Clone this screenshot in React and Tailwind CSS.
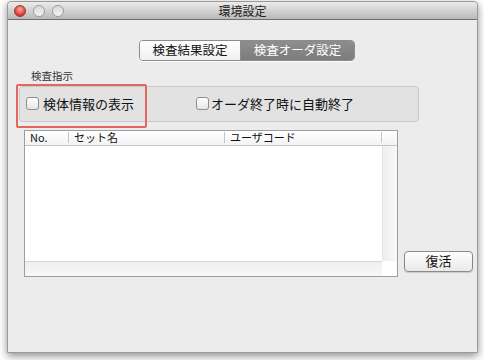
export default function App() {
  const jp = { fontFamily: '"Lucida Grande", "Noto Sans CJK JP", sans-serif' };
  return (
    <div className="w-[484px] h-[360px] bg-white relative overflow-hidden" style={jp}>
      <div className="absolute left-[7px] top-[1px] w-[471px] h-[352px] border border-[#9a9a9a] rounded-t-[4px] bg-[#ececec] shadow-[0_3px_8px_rgba(0,0,0,0.45)] flex flex-col">
        {/* title bar */}
        <div className="h-[18px] shrink-0 flex items-center relative rounded-t-[4px] border-b border-[#6e6e6e] bg-gradient-to-b from-[#ececec] to-[#b9b9b9]">
          <div className="flex items-center gap-[7px] pl-[6px]">
            <div className="w-[12px] h-[12px] rounded-full bg-[radial-gradient(circle_at_50%_35%,#ffb0a8,#e0413a_60%,#a82a24)] border border-[#9a3a34]" />
            <div className="w-[12px] h-[12px] rounded-full bg-gradient-to-b from-[#d8d8d8] to-[#f4f4f4] border border-[#9c9c9c]" />
            <div className="w-[12px] h-[12px] rounded-full bg-gradient-to-b from-[#d8d8d8] to-[#f4f4f4] border border-[#9c9c9c]" />
          </div>
          <div className="absolute left-0 right-0 top-0 h-full flex items-center justify-center text-[12px] text-[#222] leading-none">環境設定</div>
        </div>
        {/* content */}
        <div className="flex-1 relative">
          {/* segmented control */}
          <div className="flex justify-start pl-[131px] pt-[20px]">
            <div className="flex h-[21px] rounded-[4px] border border-[#8c8c8c] overflow-hidden shadow-[0_1px_0_rgba(255,255,255,0.8)]">
              <div className="w-[101px] flex items-center justify-center bg-gradient-to-b from-white to-[#f0f0f0] text-[12.5px] text-[#111] border-r border-[#8c8c8c]">検査結果設定</div>
              <div className="w-[113px] flex items-center justify-center bg-gradient-to-b from-[#8e8e8e] to-[#7c7c7c] text-[12.5px] text-white">検査オーダ設定</div>
            </div>
          </div>
          <div className="pl-[23px] pt-[10px] text-[10.5px] text-[#333] leading-none">検査指示</div>
          {/* group box */}
          <div className="ml-[11px] mt-[4px] w-[400px] h-[36px] rounded-[4px] border border-[#c9c9c9] bg-[#e2e2e2] flex items-center">
            <div className="flex items-center pl-[6px] w-[176px]">
              <div className="w-[13px] h-[13px] rounded-[3px] border border-[#8e8e8e] bg-gradient-to-b from-white to-[#e6e6e6]" />
              <span className="ml-[4px] text-[13px] text-[#111]">検体情報の表示</span>
            </div>
            <div className="flex items-center">
              <div className="w-[13px] h-[13px] rounded-[3px] border border-[#8e8e8e] bg-gradient-to-b from-white to-[#e6e6e6]" />
              <span className="ml-[2px] text-[13px] text-[#111]">オーダ終了時に自動終了</span>
            </div>
          </div>
          {/* red highlight */}
          <div className="absolute left-[8px] top-[64px] w-[131px] h-[44px] border-2 border-[#e2685f] rounded-[2px]" />
          {/* table + button */}
          <div className="flex items-start mt-[8px]">
            <div className="ml-[16px] w-[374px] h-[147px] border border-[#9e9e9e] bg-white flex flex-col">
              <div className="h-[15px] shrink-0 flex items-center border-b border-[#c4c4c4] bg-gradient-to-b from-white to-[#f3f3f3] text-[11px] text-[#111] leading-none">
                <div className="w-[44px] pl-[5px] border-r border-[#c4c4c4] h-[11px] flex items-center">No.</div>
                <div className="w-[156px] pl-[5px] border-r border-[#c4c4c4] h-[11px] flex items-center">セット名</div>
                <div className="w-[157px] pl-[5px] border-r border-[#c4c4c4] h-[11px] flex items-center">ユーザコード</div>
              </div>
              <div className="flex-1 flex">
                <div className="flex-1 flex flex-col">
                  <div className="flex-1 bg-white" />
                  <div className="h-[15px] border-t border-[#d6d6d6] bg-gradient-to-b from-[#efefef] to-[#f8f8f8]" />
                </div>
                <div className="w-[15px] flex flex-col">
                  <div className="flex-1 bg-gradient-to-r from-[#efefef] to-[#f8f8f8] border-l border-[#e2e2e2]" />
                  <div className="h-[15px] bg-white" />
                </div>
              </div>
            </div>
            <div className="ml-[6px] mt-[121px] w-[69px] h-[21px] rounded-[4px] border border-[#8a8a8a] bg-gradient-to-b from-white to-[#e9e9e9] flex items-center justify-center text-[13px] text-[#111] shadow-[0_1px_1px_rgba(0,0,0,0.15)]">復活</div>
          </div>
        </div>
      </div>
    </div>
  );
}
